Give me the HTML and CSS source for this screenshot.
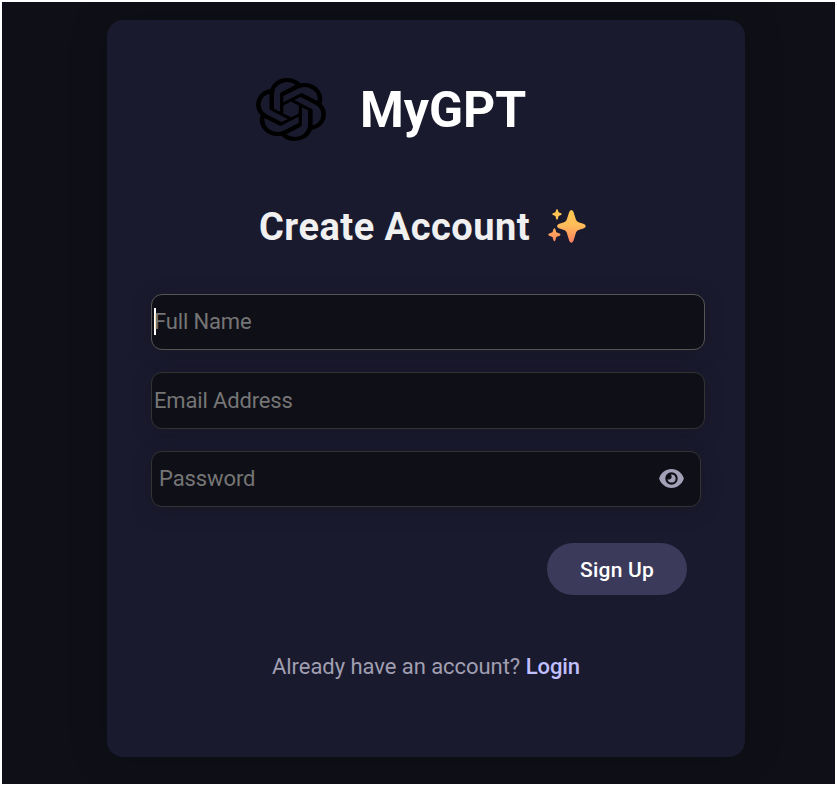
FILE: index.html
```
<!DOCTYPE html>
<html lang="en">
<head>
<meta charset="utf-8">
<title>MyGPT</title>
<link rel="stylesheet" href="styles.css">
</head>
<body>
<main class="page">
  <section class="card">
    <header class="brand">
      <svg class="logo" viewBox="0.15 0 23.7 24" preserveAspectRatio="none" aria-hidden="true"><path d="M22.2819 9.8211a5.9847 5.9847 0 0 0-.5157-4.9108 6.0462 6.0462 0 0 0-6.5098-2.9A6.0651 6.0651 0 0 0 4.9807 4.1818a5.9847 5.9847 0 0 0-3.9977 2.9 6.0462 6.0462 0 0 0 .7427 7.0966 5.98 5.98 0 0 0 .511 4.9107 6.051 6.051 0 0 0 6.5146 2.9001A5.9847 5.9847 0 0 0 13.2599 24a6.0557 6.0557 0 0 0 5.7718-4.2058 5.9894 5.9894 0 0 0 3.9977-2.9001 6.0557 6.0557 0 0 0-.7475-7.0729zm-9.022 12.6081a4.4755 4.4755 0 0 1-2.8764-1.0408l.1419-.0804 4.7783-2.7582a.7948.7948 0 0 0 .3927-.6813v-6.7369l2.02 1.1686a.071.071 0 0 1 .038.052v5.5826a4.504 4.504 0 0 1-4.4945 4.4944zm-9.6607-4.1254a4.4708 4.4708 0 0 1-.5346-3.0137l.142.0852 4.783 2.7582a.7712.7712 0 0 0 .7806 0l5.8428-3.3685v2.3324a.0804.0804 0 0 1-.0332.0615L9.74 19.9502a4.4992 4.4992 0 0 1-6.1408-1.6464zM2.3408 7.8956a4.485 4.485 0 0 1 2.3655-1.9728V11.6a.7664.7664 0 0 0 .3879.6765l5.8144 3.3543-2.0201 1.1685a.0757.0757 0 0 1-.071 0l-4.8303-2.7865A4.504 4.504 0 0 1 2.3408 7.872zm16.5963 3.8558L13.1038 8.364 15.1192 7.2a.0757.0757 0 0 1 .071 0l4.8303 2.7913a4.4944 4.4944 0 0 1-.6765 8.1042v-5.6772a.79.79 0 0 0-.407-.667zm2.0107-3.0231l-.142-.0852-4.7735-2.7818a.7759.7759 0 0 0-.7854 0L9.409 9.2297V6.8974a.0662.0662 0 0 1 .0284-.0615l4.8303-2.7866a4.4992 4.4992 0 0 1 6.6802 4.66zM8.3065 12.863l-2.02-1.1638a.0804.0804 0 0 1-.038-.0567V6.0742a4.4992 4.4992 0 0 1 7.3757-3.4537l-.142.0805L8.704 5.459a.7948.7948 0 0 0-.3927.6813zm1.0976-2.3654l2.602-1.4998 2.6069 1.4998v2.9994l-2.5974 1.4997-2.6067-1.4997Z"/></svg>
      <h1 class="name">MyGPT</h1>
    </header>
    <h2 class="title"><span>Create Account</span>
      <svg class="sparkles" viewBox="0 0 38 35" aria-hidden="true">
        <defs><linearGradient id="glow" gradientUnits="userSpaceOnUse" x1="0" y1="0" x2="0" y2="35"><stop offset="0" stop-color="#ffc94f"/><stop offset=".45" stop-color="#ffbd59"/><stop offset="1" stop-color="#ff7d63"/></linearGradient></defs>
        <path fill="url(#glow)" d="M21.3 2.8Q23.4-.6 25.4 2.8L28 10.8Q28.7 12.7 30.6 13.3L36 15.1Q39.4 17.2 36 19.3L30.6 21.1Q28.7 21.7 28 23.6L25.4 32Q23.4 35.6 21.3 32L18.7 23.6Q18 21.7 16.1 21.1L10.7 19.3Q7.4 17.2 10.7 15.1L16.1 13.3Q18 12.7 18.7 10.8Z"/>
        <path fill="url(#glow)" d="M8.2 1Q9-.8 9.8 1L10.6 3.3 13 4.2Q14.5 5.1 13 6L10.6 6.9 9.8 9.9Q9 11.5 8.2 9.9L7.4 6.9 5 6Q3.5 5.1 5 4.2L7.4 3.3Z"/>
        <path fill="url(#glow)" d="M5.4 20.2Q6.4 18.3 7.4 20.2L8.3 23.3 11.6 24.6Q13.4 25.7 11.6 26.8L8.3 28 7.4 31.3Q6.4 33.4 5.4 31.3L4.5 28 1.2 26.8Q-.6 25.7 1.2 24.6L4.5 23.3Z"/>
      </svg>
    </h2>
    <form class="form">
      <label class="field focused"><span class="caret"></span><span class="hint">Full Name</span></label>
      <label class="field"><span class="hint">Email Address</span></label>
      <label class="field password"><span class="hint">Password</span>
        <svg class="eye" viewBox="0 0 25 19" aria-hidden="true"><path fill="#a3a1b8" fill-rule="evenodd" d="M12.5 0C18.5 0 22.8 4 24.6 8.4Q25 9.5 24.6 10.6C22.8 15 18.5 19 12.5 19S2.2 15 .4 10.6Q0 9.5 .4 8.4C2.2 4 6.5 0 12.5 0ZM12.5 3.3a6.2 6.2 0 1 0 0 12.4a6.2 6.2 0 1 0 0-12.4Z"/><path fill="#a3a1b8" d="M12.5 5.4a4.1 4.1 0 1 1-4 4.9q2.4.7 3.7-1Q13.2 7.7 12 5.4Z"/></svg>
      </label>
      <button class="submit" type="button">Sign Up</button>
    </form>
    <p class="switch">Already have an account? <a class="login">Login</a></p>
  </section>
</main>
</body>
</html>
```
FILE: styles.css
```
* { box-sizing: border-box; }
body {
  margin: 0;
  padding: 2px;
  height: 786px;
  background: #fff;
  font-family: Roboto, "Liberation Sans", sans-serif;
}
.page {
  height: 782px;
  padding: 18px 90px 0 105px;
  background: #0f0f17;
  overflow: hidden;
}
.card {
  width: 638px;
  height: 737px;
  padding: 58px 40px 0 44px;
  border-radius: 16px;
  background: #1a1a2e;
  box-shadow: 0 0 40px rgba(0, 0, 0, .2);
}
.brand {
  display: flex;
  height: 63px;
  padding-left: 105px;
  align-items: center;
  gap: 34px;
}
.logo {
  width: 70px;
  height: 63px;
  fill: #000;
}
.name {
  margin: 0;
  color: #fff;
  font-size: 50px;
  line-height: 62px;
  font-weight: 700;
}
.title {
  display: flex;
  align-items: center;
  gap: 18px;
  height: 50px;
  margin: 60px 0 0 108px;
  color: #f0f0f0;
  font-size: 38px;
  font-weight: 700;
  letter-spacing: .5px;
  white-space: nowrap;
}
.title span { padding-top: 2px; }
.sparkles { width: 38px; height: 35px; }
.form {
  display: flex;
  flex-direction: column;
  gap: 22px;
  margin-top: 43px;
}
.field {
  display: flex;
  align-items: center;
  width: 554px;
  height: 57px;
  padding: 0 2px;
  border: 1px solid #333;
  border-radius: 11px;
  background: #0f0f17;
  box-shadow: 0 4px 20px rgba(20, 16, 24, .3);
  color: #757575;
  font-size: 22px;
  letter-spacing: -.15px;
}
.focused { height: 56px; padding-bottom: 2px; border-color: #555; }
.caret { width: 2px; height: 27px; margin-right: -2px; background: #fff; }
.password {
  justify-content: space-between;
  width: 550px;
  height: 56px;
  padding: 0 16px 2px 7px;
  letter-spacing: -.1px;
}
.eye { width: 25px; height: 19px; }
.submit {
  align-self: flex-end;
  width: 140px;
  height: 52px;
  margin: 14px 18px 0 0;
  padding: 2px 0 0;
  border: 0;
  border-radius: 26px;
  background: #3b3a5a;
  color: #fff;
  font: 500 21px Roboto, "Liberation Sans", sans-serif;
  letter-spacing: .2px;
}
.switch {
  margin: 59px 0 0 121px;
  color: #a09fb1;
  font-size: 22px;
  line-height: 26px;
  letter-spacing: -.05px;
  white-space: nowrap;
}
.login { color: #c0bfff; font-weight: 500; }
```
